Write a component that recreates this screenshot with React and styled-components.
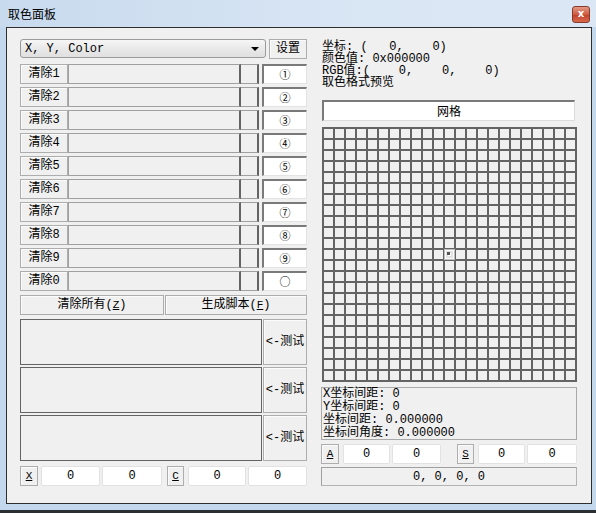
import React from "react"
import styled, { createGlobalStyle } from "styled-components"

const GlobalStyle = createGlobalStyle`
  html, body {
    margin: 0;
    padding: 0;
    background: #2b2b2b;
  }
  body {
    font-family: "Liberation Mono", "Noto Sans CJK SC", monospace;
    font-size: 12px;
    color: #000;
  }
  * { box-sizing: border-box; }
`

const Window = styled.div`
  width: 596px;
  height: 513px;
  display: flex;
  flex-direction: column;
  background: #c3d7ed;
`

const TitleBar = styled.div`
  height: 27px;
  display: flex;
  align-items: center;
  justify-content: space-between;
  padding: 0 6px 0 8px;
  background: linear-gradient(to right, #c8daee, #d9e6f4 60%, #dbe7f5);
`

const Title = styled.span`
  font-family: "Noto Sans CJK SC", sans-serif;
  font-size: 12px;
  line-height: 14px;
`

const CloseButton = styled.div`
  width: 18px;
  height: 17px;
  margin-top: 1px;
  border: 1px solid #8a3a2b;
  border-radius: 3px;
  background: linear-gradient(#e39a86, #cf5a40 50%, #c1402a 51%, #d86a4e);
  color: #fff;
  font-family: "DejaVu Sans", sans-serif;
  font-size: 10px;
  font-weight: bold;
  line-height: 14px;
  text-align: center;
`

const FrameBody = styled.div`
  padding: 0 4px 6px 6px;
`

const Client = styled.div`
  height: 477px;
  border: 1px solid #2e2e2e;
  background: #f0f0f0;
  display: flex;
  gap: 14px;
  padding: 11px 14px 0 13px;
`

const DarkStrip = styled.div`
  height: 3px;
  background: #2b2e33;
`

const LeftColumn = styled.div`
  width: 287px;
  display: flex;
  flex-direction: column;
`

const RightColumn = styled.div`
  width: 256px;
  display: flex;
  flex-direction: column;
`

const Row = styled.div`
  display: flex;
  height: ${p => p.$h || 20}px;
  margin-top: ${p => p.$mt || 0}px;
  gap: ${p => p.$gap || 0}px;
`

const Combo = styled.div`
  width: 246px;
  height: 19px;
  border: 1px solid #9a9a9a;
  border-radius: 3px;
  background: linear-gradient(#f6f6f6, #e9e9e9 50%, #e0e0e0);
  display: flex;
  align-items: center;
  justify-content: space-between;
  padding: 0 6px 0 4px;
  white-space: pre;
  line-height: 14px;
`

const Arrow = styled.span`
  width: 0;
  height: 0;
  border-left: 4px solid transparent;
  border-right: 4px solid transparent;
  border-top: 4px solid #000;
`

const Button = styled.div`
  width: ${p => p.$w}px;
  height: ${p => p.$h || 20}px;
  margin-left: ${p => p.$ml || 0}px;
  border: 1px solid #adadad;
  background: #f0f0f0;
  box-shadow: inset 1px 1px 0 #fbfbfb;
  display: flex;
  align-items: center;
  justify-content: center;
  white-space: pre;
  line-height: 14px;
  flex-shrink: 0;
`

const Underlined = styled.span`
  text-decoration: underline;
  font-size: 11px;
`

const ClearList = styled.div`
  display: flex;
  flex-direction: column;
  gap: 3px;
  margin-top: 5px;
`

const SunkenField = styled.div`
  width: ${p => p.$w}px;
  height: 20px;
  background: #f0f0f0;
  border-top: 1px solid #a0a0a0;
  border-bottom: 1px solid #a0a0a0;
  border-left: ${p => (p.$noLeft ? 0 : 1)}px solid #a0a0a0;
  border-right: 2px solid #646464;
`

const NumBox = styled.div`
  width: 45px;
  height: 20px;
  margin-left: 3px;
  background: #fff;
  border-top: 2px solid #7a7a7a;
  border-left: 2px solid #7a7a7a;
  border-right: 1px solid #e3e3e3;
  border-bottom: 1px solid #e3e3e3;
  display: flex;
  align-items: center;
  justify-content: center;
  font-family: "Noto Sans CJK SC", sans-serif;
  font-size: 11px;
  line-height: 13px;
`

const TestList = styled.div`
  display: flex;
  flex-direction: column;
  gap: 2px;
  margin-top: 4px;
`

const TestArea = styled.div`
  width: 242px;
  height: 46px;
  border: 1px solid #646464;
  background: #f0f0f0;
`

const Entry = styled.div`
  width: ${p => p.$w}px;
  height: 20px;
  margin-left: ${p => p.$ml || 0}px;
  background: #fff;
  border: 1px solid #e2e2e2;
  border-radius: 2px;
  display: flex;
  align-items: center;
  justify-content: center;
  line-height: 14px;
`

const InfoText = styled.div`
  margin-top: 2px;
  padding-left: 1px;
  line-height: 12px;
  white-space: pre;
`

const Line = styled.div`
  height: ${p => p.$lh || 12}px;
  line-height: ${p => p.$lh || 12}px;
`

const GridLabel = styled.div`
  width: 253px;
  height: 21px;
  margin: 11px 0 0 1px;
  background: #fff;
  border-top: 2px solid #7a7a7a;
  border-left: 2px solid #7a7a7a;
  border-right: 1px solid #dcdcdc;
  border-bottom: 1px solid #dcdcdc;
  display: flex;
  align-items: center;
  justify-content: center;
  font-family: "Noto Sans CJK SC", sans-serif;
  line-height: 14px;
`

const Grid = styled.div`
  width: 255px;
  height: 255px;
  margin: 6px 0 0 1px;
  display: grid;
  grid-template-columns: repeat(23, 9px);
  grid-auto-rows: 9px;
  gap: 2px;
  padding: 2px;
  background: #646464;
`

const Cell = styled.div`
  position: relative;
  background: ${p => (p.$active ? "#e2e2e2" : "#f0f0f0")};
  box-shadow: ${p => (p.$active ? "inset 0 0 0 1px #fafafa, 0 0 0 1px #bdbdbd" : "none")};

  &::after {
    content: "";
    display: ${p => (p.$active ? "block" : "none")};
    position: absolute;
    left: 2px;
    top: 2px;
    width: 3px;
    height: 3px;
    background: #555;
    box-shadow: 1px 1px 0 #fff;
  }
`

const InfoBox = styled.div`
  height: 53px;
  margin-top: 5px;
  border: 1px solid #a9a9a9;
  background: #f0f0f0;
  padding: 0 0 0 1px;
  white-space: pre;
`

const StatusBox = styled.div`
  height: 19px;
  margin-top: 3px;
  border: 1px solid #b4b4b4;
  border-top-color: #a0a0a0;
  border-left-color: #a0a0a0;
  display: flex;
  align-items: center;
  justify-content: center;
  white-space: pre;
  line-height: 14px;
`

const clearRows = [
  ["1", "①"], ["2", "②"], ["3", "③"], ["4", "④"], ["5", "⑤"],
  ["6", "⑥"], ["7", "⑦"], ["8", "⑧"], ["9", "⑨"], ["0", "○"],
]

const cells = Array.from({ length: 23 * 23 }, (_, i) => i)
const CENTER = 11 * 23 + 11

const App = () => {
  return (
    <Window>
      <GlobalStyle />
      <TitleBar>
        <Title>取色面板</Title>
        <CloseButton>x</CloseButton>
      </TitleBar>
      <FrameBody>
        <Client>
          <LeftColumn>
            <Row $gap={3}>
              <Combo>
                X, Y, Color
                <Arrow />
              </Combo>
              <Button $w={38}>设置</Button>
            </Row>

            <ClearList>
              {clearRows.map(([n, mark]) => (
                <Row key={n}>
                  <Button $w={48}>清除{n}</Button>
                  <SunkenField $w={173} />
                  <SunkenField $w={18} $noLeft />
                  <NumBox>{mark}</NumBox>
                </Row>
              ))}
            </ClearList>

            <Row $mt={4} $gap={1}>
              <Button $w={144}>清除所有(<Underlined>Z</Underlined>)</Button>
              <Button $w={142}>生成脚本(<Underlined>F</Underlined>)</Button>
            </Row>

            <TestList>
              {[0, 1, 2].map(i => (
                <Row key={i} $h={46} $gap={1}>
                  <TestArea />
                  <Button $w={44} $h={46}>{"<-测试"}</Button>
                </Row>
              ))}
            </TestList>

            <Row $mt={5}>
              <Button $w={18}><Underlined>X</Underlined></Button>
              <Entry $w={59} $ml={3}>0</Entry>
              <Entry $w={60} $ml={2}>0</Entry>
              <Button $w={17} $ml={5}><Underlined>C</Underlined></Button>
              <Entry $w={58} $ml={4}>0</Entry>
              <Entry $w={59} $ml={2}>0</Entry>
            </Row>
          </LeftColumn>

          <RightColumn>
            <InfoText>
              <Line>{"坐标: (   0,    0)"}</Line>
              <Line>{"颜色值: 0x000000"}</Line>
              <Line>{"RGB值:(    0,    0,    0)"}</Line>
              <Line>取色格式预览</Line>
            </InfoText>

            <GridLabel>网格</GridLabel>

            <Grid>
              {cells.map(i => (
                <Cell key={i} $active={i === CENTER} />
              ))}
            </Grid>

            <InfoBox>
              <Line $lh={13}>{"X坐标间距: 0"}</Line>
              <Line $lh={13}>{"Y坐标间距: 0"}</Line>
              <Line $lh={13}>{"坐标间距: 0.000000"}</Line>
              <Line $lh={13}>{"坐标间角度: 0.000000"}</Line>
            </InfoBox>

            <Row $mt={4}>
              <Button $w={18}><Underlined>A</Underlined></Button>
              <Entry $w={47} $ml={4}>0</Entry>
              <Entry $w={49} $ml={2}>0</Entry>
              <Button $w={17} $ml={16}><Underlined>S</Underlined></Button>
              <Entry $w={47} $ml={4}>0</Entry>
              <Entry $w={50} $ml={2}>0</Entry>
            </Row>

            <StatusBox>{"0, 0, 0, 0"}</StatusBox>
          </RightColumn>
        </Client>
      </FrameBody>
      <DarkStrip />
    </Window>
  )
}

export default App
